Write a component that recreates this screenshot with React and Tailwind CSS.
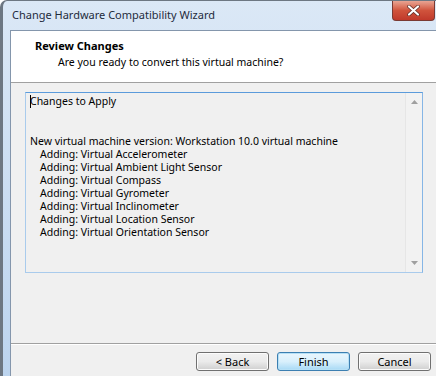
import React from "react";

const font = { fontFamily: '"Segoe UI", "Noto Sans", "DejaVu Sans", sans-serif' };

const lines = [
  "Adding: Virtual Accelerometer",
  "Adding: Virtual Ambient Light Sensor",
  "Adding: Virtual Compass",
  "Adding: Virtual Gyrometer",
  "Adding: Virtual Inclinometer",
  "Adding: Virtual Location Sensor",
  "Adding: Virtual Orientation Sensor",
];

function WinButton({ children, focused }) {
  return (
    <button
      className={`w-[73px] h-[19px] rounded-[3px] border text-[11px] leading-none text-black bg-gradient-to-b ${
        focused
          ? "border-[#3c7fb1] from-[#eaf6fd] via-[#d9f0fc] to-[#a7d9f5] shadow-[inset_0_0_0_1px_#b6e0f6]"
          : "border-[#707070] from-[#f2f2f2] via-[#ebebeb] to-[#cfcfcf] shadow-[inset_0_0_0_1px_#fcfcfc]"
      }`}
    >
      {children}
    </button>
  );
}

export default function App() {
  return (
    <div className="w-[436px] h-[376px] overflow-hidden bg-white" style={font}>
      <div className="w-full h-full flex flex-col rounded-tl-[7px] border-l-[3px] border-t border-[#6d7782] bg-gradient-to-b from-[#dbe8f6] to-[#bcd4ee]">
        <div className="h-[29px] flex items-start justify-between">
          <div className="pl-[9px] pt-[7px] text-[11px] leading-[14px] text-[#1e2b3c]">Change Hardware Compatibility Wizard</div>
          <div className="w-[43px] h-[20px] mr-[1px] rounded-b-[4px] border border-t-0 border-[#7a3a33] bg-gradient-to-b from-[#e8a493] via-[#d0533c] to-[#c0392b] flex items-center justify-center">
            <svg width="13" height="11" viewBox="0 0 13 11">
              <path d="M2 1.5 L11 9.5 M11 1.5 L2 9.5" stroke="#5a2a24" strokeWidth="3.6" strokeLinecap="round" />
              <path d="M2 1.5 L11 9.5 M11 1.5 L2 9.5" stroke="#ffffff" strokeWidth="2.2" strokeLinecap="round" />
            </svg>
          </div>
        </div>
        <div className="flex-1 ml-[7px] flex flex-col border-l border-t border-[#8496ac] bg-[#f0f0f0]">
          <div className="h-[52px] bg-white border-b border-[#a0a0a0] flex flex-col pl-[24px] pt-[7px]">
            <div className="text-[11px] font-bold text-black leading-[15px]">Review Changes</div>
            <div className="text-[10.5px] text-black leading-[15px] pl-[23px] mt-[2px]">
              Are you ready to convert this virtual machine?
            </div>
          </div>
          <div className="pl-[14px] pr-[13px] pt-[9px]">
            <div className="h-[181px] border border-[#a9cbec] border-t-[#5b9bdb] border-r-[#86b6e6] bg-[#f0f0f0] flex">
              <div className="flex-1 pl-[4px] pt-[2px] text-[10.5px] leading-[13px] text-black">
                <div>
                  <span className="inline-block w-px h-[13px] bg-black align-top -mr-px" />
                  Changes to Apply
                </div>
                <div className="h-[26px]" />
                <div className="mt-[1px]">New virtual machine version: Workstation 10.0 virtual machine</div>
                {lines.map((l) => (
                  <div key={l} className="pl-[10px]">
                    {l}
                  </div>
                ))}
              </div>
              <div className="w-[17px] flex flex-col justify-between items-center bg-[#f2f2f2] border-l border-[#e6e6e6]">
                <svg width="9" height="14" viewBox="0 0 9 14" className="mt-[2px]">
                  <path d="M1 9 L4.5 5 L8 9 Z" fill="#a0a0a0" />
                </svg>
                <svg width="9" height="14" viewBox="0 0 9 14" className="mb-[2px]">
                  <path d="M1 5 L4.5 9 L8 5 Z" fill="#a0a0a0" />
                </svg>
              </div>
            </div>
          </div>
          <div className="flex-1" />
          <div className="border-t border-[#a0a0a0] shadow-[inset_0_1px_0_#ffffff] h-[33px] flex items-start justify-end gap-[8px] pr-[5px] pt-[8px]">
            <WinButton>&lt; Back</WinButton>
            <WinButton focused>Finish</WinButton>
            <WinButton>Cancel</WinButton>
          </div>
        </div>
      </div>
    </div>
  );
}
